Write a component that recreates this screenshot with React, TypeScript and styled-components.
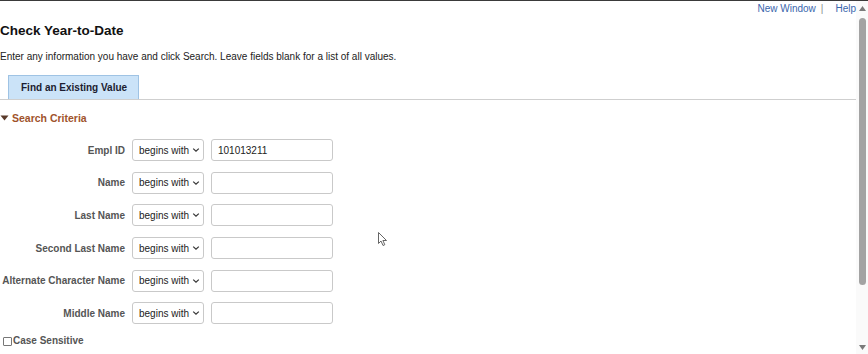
import React from "react";
import styled, { createGlobalStyle } from "styled-components";

const GlobalStyle = createGlobalStyle`
  html, body { margin: 0; padding: 0; background: #fff; overflow: hidden; }
  body { font-family: "Liberation Sans", Arial, sans-serif; }
  * { box-sizing: border-box; }
`;

const Frame = styled.div`
  display: flex;
  width: 868px;
  height: 354px;
  border-top: 1px solid #3a3a3a;
  overflow: hidden;
`;

const Main = styled.div`
  flex: 1;
  display: flex;
  flex-direction: column;
  position: relative;
  min-width: 0;
`;

const TopLinks = styled.div`
  display: flex;
  justify-content: flex-end;
  align-items: center;
  height: 15px;
  font-size: 10px;
  color: #3a66ad;
`;

const Link = styled.span`
  color: #3a66ad;
`;

const Sep = styled.span`
  color: #8a8a8a;
  margin: 0 12px 0 5px;
`;

const Title = styled.h1`
  margin: 6px 0 0 0;
  font-size: 13.5px;
  line-height: 17px;
  font-weight: bold;
  color: #111;
`;

const Desc = styled.p`
  margin: 11px 0 0 0;
  font-size: 10px;
  line-height: 14px;
  color: #222;
`;

const TabBar = styled.div`
  margin-top: 11px;
  display: flex;
  padding-left: 8px;
  border-bottom: 1px solid #cfcfcf;
`;

const Tab = styled.div`
  height: 24px;
  padding: 0 11px 0 12px;
  display: flex;
  align-items: center;
  background: #cbe3f8;
  border: 1px solid #9fc3e4;
  border-bottom: none;
  font-size: 10px;
  font-weight: bold;
  color: #1c1c30;
`;

const SectionHead = styled.div`
  margin-top: 11px;
  display: flex;
  align-items: center;
  gap: 3px;
  font-size: 10.5px;
  line-height: 14px;
  font-weight: bold;
  color: #a0532b;
`;

const Form = styled.div`
  margin-top: 14px;
  display: grid;
  grid-template-columns: 125px 72px 122px;
  column-gap: 7px;
  row-gap: 10.7px;
  align-items: center;
`;

const Label = styled.label`
  text-align: right;
  font-size: 10px;
  font-weight: bold;
  color: #555;
  white-space: nowrap;
`;

const Select = styled.div`
  height: 22px;
  border: 1px solid #c9c9c9;
  border-radius: 3px;
  display: flex;
  align-items: center;
  justify-content: space-between;
  padding: 0 3px 0 6px;
  font-size: 10px;
  color: #222;
  background: #fff;
  white-space: nowrap;
`;

const Input = styled.div`
  height: 22px;
  border: 1px solid #c9c9c9;
  border-radius: 3px;
  display: flex;
  align-items: center;
  padding: 0 6px;
  font-size: 10px;
  color: #222;
  background: #fff;
`;

const CheckRow = styled.div`
  margin-top: 10px;
  display: flex;
  align-items: center;
  gap: 1px;
  padding-left: 3px;
  font-size: 10px;
  line-height: 14px;
  font-weight: bold;
  color: #555;
`;

const Box = styled.span`
  width: 9px;
  height: 9px;
  border: 1px solid #777;
  border-radius: 1px;
  display: inline-block;
`;

const Cursor = styled.svg`
  position: absolute;
  left: 378px;
  top: 231px;
`;

const Scroll = styled.div`
  width: 12px;
  display: flex;
  flex-direction: column;
  align-items: center;
  background: #fafafa;
`;

const Arrow = styled.div`
  height: 14px;
  display: flex;
  align-items: center;
  justify-content: center;
`;

const Track = styled.div`
  flex: 1;
  width: 100%;
  display: flex;
  flex-direction: column;
  align-items: center;
  padding-top: 3px;
`;

const Thumb = styled.div`
  width: 7px;
  height: 267px;
  border-radius: 4px;
  background: #a3a3a3;
`;

const rows: { label: string; value?: string }[] = [
  { label: "Empl ID", value: "101013211" },
  { label: "Name" },
  { label: "Last Name" },
  { label: "Second Last Name" },
  { label: "Alternate Character Name" },
  { label: "Middle Name" },
];

const Chevron = () => (
  <svg width="8" height="6" viewBox="0 0 8 6">
    <path d="M1.2 1.6 L4 4.2 L6.8 1.6" fill="none" stroke="#333" strokeWidth="1.2" />
  </svg>
);

export default function App() {
  return (
    <>
      <GlobalStyle />
      <Frame>
        <Main>
          <TopLinks>
            <Link>New Window</Link>
            <Sep>|</Sep>
            <Link>Help</Link>
          </TopLinks>
          <Title>Check Year-to-Date</Title>
          <Desc>Enter any information you have and click Search. Leave fields blank for a list of all values.</Desc>
          <TabBar>
            <Tab>Find an Existing Value</Tab>
          </TabBar>
          <SectionHead>
            <svg width="9" height="6" viewBox="0 0 9 6">
              <path d="M0.5 0.5 L8.5 0.5 L4.5 5.5 Z" fill="#5a3a2a" />
            </svg>
            Search Criteria
          </SectionHead>
          <Form>
            {rows.map((r) => (
              <React.Fragment key={r.label}>
                <Label>{r.label}</Label>
                <Select>
                  begins with <Chevron />
                </Select>
                <Input>{r.value ?? ""}</Input>
              </React.Fragment>
            ))}
          </Form>
          <CheckRow>
            <Box />
            Case Sensitive
          </CheckRow>
          <Cursor width="10" height="15" viewBox="0 0 10 15">
            <path d="M0.5 0.5 L0.5 11.5 L3 9 L5 13.5 L6.8 12.7 L4.9 8.5 L8.5 8.5 Z" fill="#fff" stroke="#555" strokeWidth="0.9" />
          </Cursor>
        </Main>
        <Scroll>
          <Arrow>
            <svg width="7" height="5" viewBox="0 0 7 5">
              <path d="M0 5 L3.5 0 L7 5 Z" fill="#7a7a7a" />
            </svg>
          </Arrow>
          <Track>
            <Thumb />
          </Track>
          <Arrow>
            <svg width="7" height="5" viewBox="0 0 7 5">
              <path d="M0 0 L7 0 L3.5 5 Z" fill="#7a7a7a" />
            </svg>
          </Arrow>
        </Scroll>
      </Frame>
    </>
  );
}
